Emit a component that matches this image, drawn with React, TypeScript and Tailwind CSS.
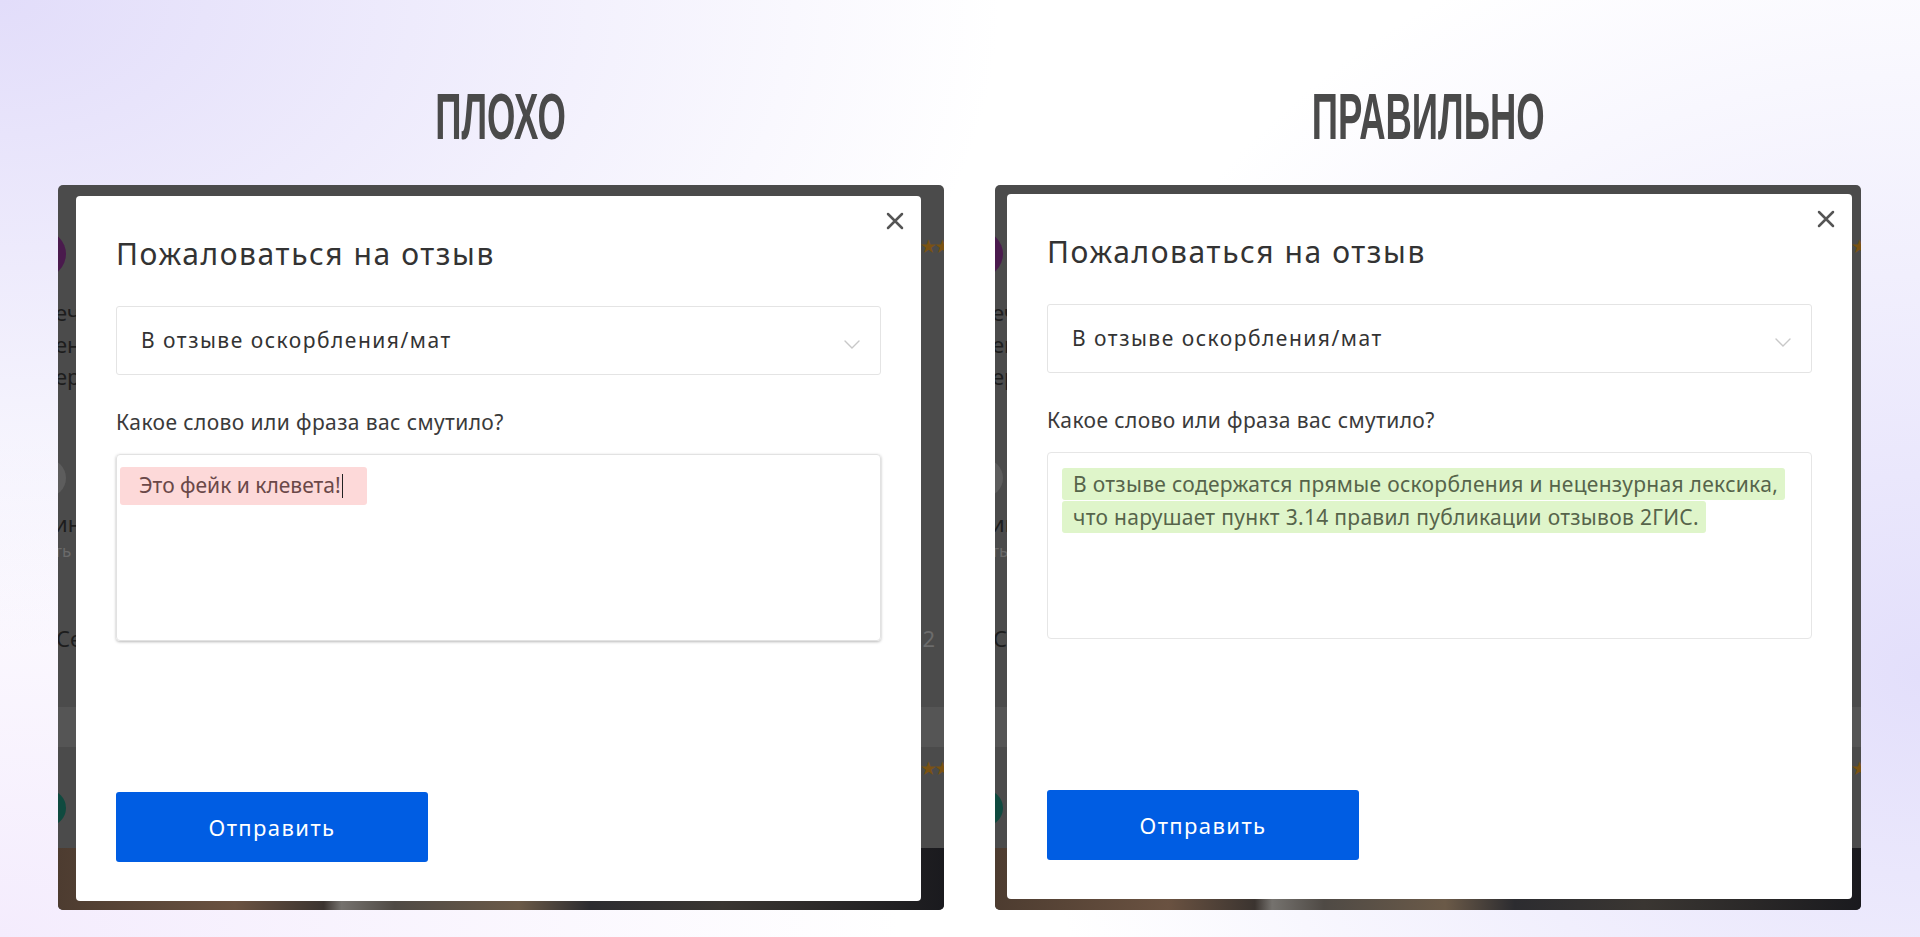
import React from 'react';

function CloseIcon() {
  return (
    <svg width="18" height="18" viewBox="0 0 18 18" fill="none" stroke="#555555" strokeWidth="2.5" strokeLinecap="round">
      <path d="M2 2 16 16M16 2 2 16" />
    </svg>
  );
}

function Chevron() {
  return (
    <svg width="16" height="9" viewBox="0 0 16 9" fill="none" stroke="#c8c8c8" strokeWidth="1.4" strokeLinecap="round">
      <path d="M1 1l7 7 7-7" />
    </svg>
  );
}

// Dimmed review page peeking out around the modal
function PageBehind() {
  return (
    <div className="flex h-full flex-col font-['Noto_Sans',sans-serif] whitespace-nowrap">
      <div className="mt-[46px] flex h-[46px] items-center justify-between">
        <div className="-ml-[38px] h-[46px] w-[46px] rounded-full bg-[#4a1a4d]" />
        <div className="-mr-[4px] mb-[16px] text-[19px] leading-none tracking-[-3px] text-[#7a5212]">★★★</div>
      </div>
      <div className="mt-[19px] -ml-[3px] text-[22px] leading-[32px] text-[#1d1d1d]">
        <div>ечно хорошее место</div>
        <div>ень приятный зал</div>
        <div>ерсонал вежливый</div>
      </div>
      <div className="mt-[67px] -ml-[30px] h-[38px] w-[38px] rounded-full bg-[#5d5d5d]" />
      <div className="mt-[12px] -ml-[4px] text-[22px] leading-[28px] text-[#1d1d1d]">ина Петрова</div>
      <div className="mt-[2px] -ml-[4px] text-[17px] leading-[24px] text-[#6a6a6a]">ть отзывов</div>
      <div className="mt-[60px] flex h-[30px] items-center justify-between text-[22px]">
        <span className="-ml-[2px] text-[#1d1d1d]">Сегодня</span>
        <span className="mr-[9px] text-[#6c6c6c]">2</span>
      </div>
      <div className="mt-[54px] h-[40px] bg-[#555555]" />
      <div className="mt-[11px] flex h-[20px] items-center justify-end">
        <div className="-mr-[4px] text-[19px] leading-none tracking-[-3px] text-[#7a5212]">★★★</div>
      </div>
      <div className="mt-[12px] -ml-[28px] h-[36px] w-[36px] rounded-full bg-[#0f4a3f]" />
      <div className="mt-auto h-[62px] bg-[linear-gradient(90deg,#4d3c30_0%,#6a5241_20%,#3b3430_30%,#75726e_32%,#4f4a45_38%,#6b5a48_52%,#2c2c30_60%,#3a3632_75%,#1a1a1e_100%)]" />
    </div>
  );
}

type ModalProps = { good?: boolean; pos: string };

function ComplaintModal({ good, pos }: ModalProps) {
  return (
    <div className={`absolute ${pos} flex h-[705px] w-[845px] flex-col rounded-[4px] bg-white px-[40px] pt-[40px] pb-[39px] font-['Noto_Sans',sans-serif]`}>
      <button className="absolute right-[17px] top-[16px]">
        <CloseIcon />
      </button>
      <h2 className="text-[30px] leading-[36px] tracking-[1.6px] text-[#333333]">Пожаловаться на отзыв</h2>

      <div className="mt-[34px] flex h-[69px] items-center justify-between rounded-[3px] border border-[#e4e4e4] pl-[24px] pr-[20px]">
        <span className="text-[21px] tracking-[1.5px] text-[#333333]">В отзыве оскорбления/мат</span>
        <span className="mt-[8px]">
          <Chevron />
        </span>
      </div>

      <div className="mt-[33px] text-[21px] leading-[28px] tracking-[0.4px] text-[#3a3a3a]">Какое слово или фраза вас смутило?</div>

      {good ? (
        <div className="mt-[18px] h-[187px] rounded-[4px] border border-[#e6e6e6] pl-[14px] pt-[15px]">
          <p className="text-[21px] leading-[32.5px] tracking-[0.3px] text-[#56644a] whitespace-nowrap">
            <span className="rounded-[3px] bg-[#dff5ca] py-[2px] pl-[11px] pr-[7px] box-decoration-clone">
              В отзыве содержатся прямые оскорбления и нецензурная лексика,
              <br />
              что нарушает пункт 3.14 правил публикации отзывов 2ГИС.
            </span>
          </p>
        </div>
      ) : (
        <div className="mt-[18px] h-[187px] rounded-[4px] border border-[#e2e2e2] pl-[3px] pt-[12px] shadow-[0_1px_3px_rgba(0,0,0,0.28)]">
          <span className="inline-flex h-[38px] items-center rounded-[3px] bg-[#fdd9d9] pl-[19px] pr-[24px] text-[21px] text-[#6a4848]">
            Это фейк и клевета!
            <span className="ml-[1px] h-[24px] w-px bg-[#222222]" />
          </span>
        </div>
      )}

      <button className="mt-auto h-[70px] w-[312px] rounded-[3px] bg-[#005de3] text-[22px] tracking-[1.4px] text-white">Отправить</button>
    </div>
  );
}

function Heading({ children }: { children: React.ReactNode }) {
  return (
    <div className="flex h-[64px] justify-center">
      <span className="inline-block scale-x-[0.57] font-['Liberation_Sans',Arial,sans-serif] text-[64px] font-bold leading-[64px] text-[#4a4a4a]">
        {children}
      </span>
    </div>
  );
}

export default function App() {
  return (
    <div className="h-[937px] w-full overflow-hidden bg-white bg-[image:radial-gradient(ellipse_1000px_650px_at_0%_0%,#e2ddfa,transparent),radial-gradient(ellipse_900px_800px_at_100%_72%,#e3dffb,transparent),radial-gradient(ellipse_900px_500px_at_0%_100%,#f4ecfd,transparent)]">
      <div className="flex gap-[51px] pl-[58px] pt-[85px]">
        <div className="w-[886px]">
          <Heading>ПЛОХО</Heading>
          <div className="relative mt-[36px] h-[725px] overflow-hidden rounded-[5px] bg-[#4b4b4b]">
            <PageBehind />
            <ComplaintModal pos="left-[18px] top-[11px]" />
          </div>
        </div>
        <div className="w-[866px]">
          <Heading>ПРАВИЛЬНО</Heading>
          <div className="relative mt-[36px] h-[725px] overflow-hidden rounded-[5px] bg-[#4b4b4b]">
            <PageBehind />
            <ComplaintModal good pos="left-[12px] top-[9px]" />
          </div>
        </div>
      </div>
    </div>
  );
}
